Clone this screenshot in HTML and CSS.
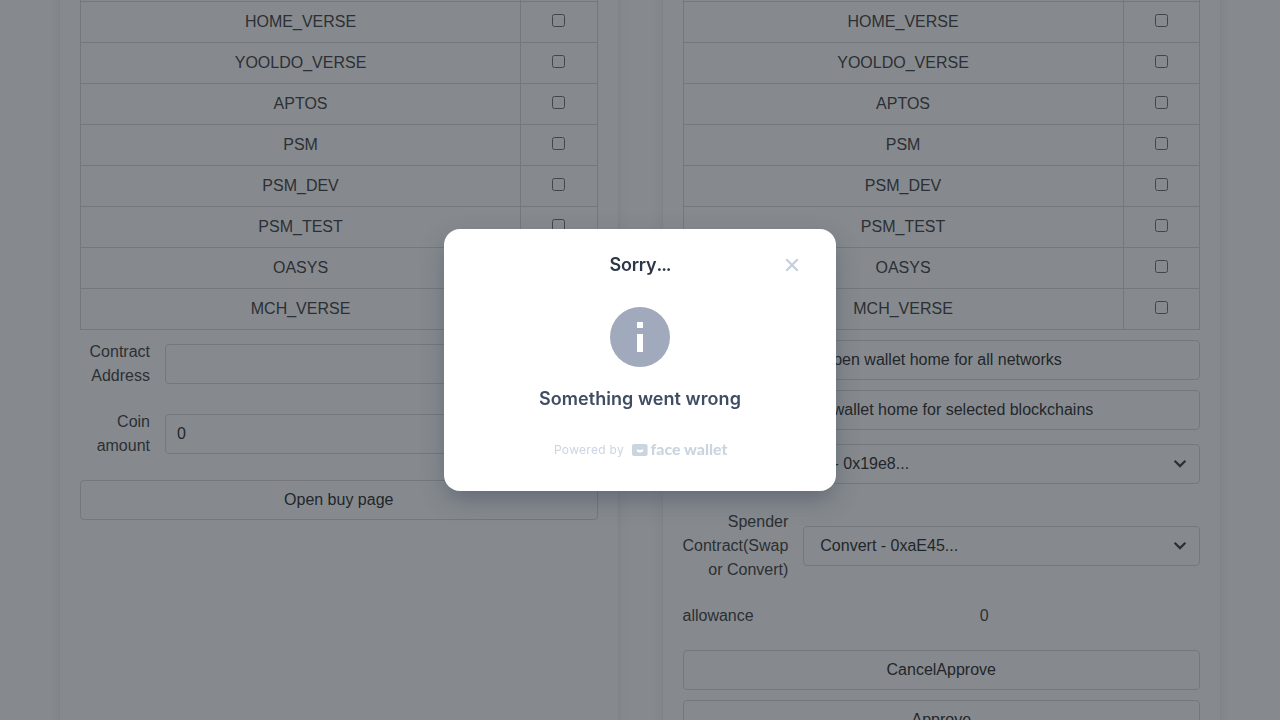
FILE: index.html
```html
<!DOCTYPE html>
<html lang="en">
<head>
<meta charset="utf-8">
<title>Face Wallet</title>
<link rel="stylesheet" href="styles.css">
</head>
<body>
<main class="page">
  <section class="box">
    <table class="networks">
      <tr><td></td><td class="check"></td></tr>
      <tr><td>HOME_VERSE</td><td class="check"><input type="checkbox"></td></tr>
      <tr><td>YOOLDO_VERSE</td><td class="check"><input type="checkbox"></td></tr>
      <tr><td>APTOS</td><td class="check"><input type="checkbox"></td></tr>
      <tr><td>PSM</td><td class="check"><input type="checkbox"></td></tr>
      <tr><td>PSM_DEV</td><td class="check"><input type="checkbox"></td></tr>
      <tr><td>PSM_TEST</td><td class="check"><input type="checkbox"></td></tr>
      <tr><td>OASYS</td><td class="check"><input type="checkbox"></td></tr>
      <tr><td>MCH_VERSE</td><td class="check"><input type="checkbox"></td></tr>
    </table>
    <div class="field first">
      <label class="label narrow">Contract Address</label>
      <input class="input" type="text">
    </div>
    <div class="field second">
      <label class="label narrow">Coin amount</label>
      <input class="input" type="text" value="0">
    </div>
    <button class="button">Open buy page</button>
  </section>
  <section class="box">
    <table class="networks">
      <tr><td></td><td class="check"></td></tr>
      <tr><td>HOME_VERSE</td><td class="check"><input type="checkbox"></td></tr>
      <tr><td>YOOLDO_VERSE</td><td class="check"><input type="checkbox"></td></tr>
      <tr><td>APTOS</td><td class="check"><input type="checkbox"></td></tr>
      <tr><td>PSM</td><td class="check"><input type="checkbox"></td></tr>
      <tr><td>PSM_DEV</td><td class="check"><input type="checkbox"></td></tr>
      <tr><td>PSM_TEST</td><td class="check"><input type="checkbox"></td></tr>
      <tr><td>OASYS</td><td class="check"><input type="checkbox"></td></tr>
      <tr><td>MCH_VERSE</td><td class="check"><input type="checkbox"></td></tr>
    </table>
    <button class="button stacked">Open wallet home for all networks</button>
    <button class="button stacked">Open wallet home for selected blockchains</button>
    <div class="field swap">
      <label class="label narrow"></label>
      <div class="select">Swap - 0x19e8...
        <svg class="arrow" width="14" height="10" viewBox="0 0 14 10"><path d="M1.6 1.8 7 7.1l5.4-5.3" /></svg>
      </div>
    </div>
    <div class="field spender">
      <label class="label wide">Spender Contract(Swap or Convert)</label>
      <div class="select">Convert - 0xaE45...
        <svg class="arrow" width="14" height="10" viewBox="0 0 14 10"><path d="M1.6 1.8 7 7.1l5.4-5.3" /></svg>
      </div>
    </div>
    <div class="allowance"><span>allowance</span><span class="amount">0</span></div>
    <button class="button">CancelApprove</button>
    <button class="button stacked">Approve</button>
  </section>
</main>
<div class="overlay">
  <div class="modal">
    <header class="modal-head">
      <h1 class="title">Sorry<span class="dots">...</span></h1>
      <svg class="close" width="24" height="24" viewBox="0 0 24 24"><path d="M6.3 6.3 17.7 17.7M17.7 6.3 6.3 17.7"/></svg>
    </header>
    <svg class="info" width="60" height="60" viewBox="0 0 60 60"><circle cx="30" cy="30" r="30" fill="#a0aabc"/><path d="M27 15h6v6h-6zM27 27h6v18h-6z" fill="#fff"/></svg>
    <p class="message">Something went wrong</p>
    <footer class="powered">
      <span>Powered by</span>
      <svg class="brand" width="96" height="20" viewBox="0 0 96 20"><rect x="0" y="4" width="15.6" height="12" rx="2" fill="#cbd5e0"/><path d="M4.7 9.2 8 10.2l3.3-1a3.3 3.3 0 0 1-6.6 0z" fill="#fff"/><text x="18.5" y="15" textLength="77" lengthAdjust="spacingAndGlyphs">face wallet</text></svg>
    </footer>
  </div>
</div>
</body>
</html>
```
FILE: styles.css
```css
* { box-sizing: border-box; }
body {
  margin: 0;
  height: 720px;
  overflow: hidden;
  background: #fff;
  color: #4a4a4a;
  font: 16px/24px "Liberation Sans", Arial, sans-serif;
}
.page {
  display: flex;
  gap: 45px;
  height: 760px;
  margin-top: -40px;
  padding: 0 60px;
  overflow: hidden;
}
.box {
  flex: 1;
  min-width: 0;
  height: 900px;
  padding: 0 20px;
  box-shadow: 0 8px 16px -2px rgba(10, 10, 10, .1), 0 0 0 1px rgba(10, 10, 10, .02);
}
.networks {
  width: 100%;
  table-layout: fixed;
  border-collapse: collapse;
}
.networks td {
  height: 41px;
  padding: 8px 12px;
  border: 1px solid #dbdbdb;
  text-align: center;
  vertical-align: top;
}
.networks .check { width: 76.4px; }
.networks input {
  width: 13px;
  height: 13px;
  margin: 0;
  vertical-align: baseline;
}
.field { display: flex; align-items: center; }
.label { flex: none; margin-right: 15px; text-align: right; }
.narrow { width: 70px; }
.wide { width: 105.8px; }
.first { margin-top: 10px; height: 48px; }
.second { margin: 22px 0; height: 48px; }
.input, .select, .button {
  height: 40px;
  border: 1px solid #dbdbdb;
  border-radius: 4px;
  background: #fff;
  color: #363636;
  font: inherit;
}
.input { flex: 1; min-width: 0; padding: 0 11px; }
.select {
  display: flex;
  flex: 1;
  align-items: center;
  justify-content: space-between;
  padding: 0 12px 0 16px;
}
.arrow { fill: none; stroke: #4a4a4a; stroke-width: 2.3; }
.button { display: block; width: 100%; padding: 0; text-align: center; }
.stacked { margin-top: 10px; }
.swap { height: 48px; margin-top: 10px; }
.swap .label { width: 74.5px; }
.spender { height: 72px; margin-top: 22px; }
.allowance { display: flex; margin: 22px 0; }
.amount { flex: 1; padding-left: 15px; text-align: center; }
.allowance span:first-child { width: 71px; }
.overlay {
  position: fixed;
  inset: 0;
  display: flex;
  align-items: center;
  justify-content: center;
  background: rgba(14, 21, 29, .5);
}
.modal {
  display: flex;
  flex-direction: column;
  align-items: center;
  width: 392px;
  height: 262px;
  padding-top: 22px;
  border-radius: 16px;
  background: #fff;
  box-shadow: 0 10px 24px -2px rgba(45, 55, 80, .4);
  font-family: Inter, sans-serif;
}
.modal-head {
  display: grid;
  grid-template-columns: 24px 1fr 24px;
  align-items: center;
  width: 100%;
  height: 28px;
  padding: 0 32px;
}
.title {
  grid-column: 2;
  margin: 0;
  color: #2d3748;
  font-size: 18px;
  font-weight: 600;
  line-height: 28px;
  letter-spacing: -.2px;
  text-align: center;
}
.dots { letter-spacing: -1px; }
.close { fill: none; stroke: #c5cfdb; stroke-width: 2.2; }
.info { flex: none; margin-top: 28px; }
.message {
  margin: 18px 0 0;
  color: #3f4d63;
  font-size: 18px;
  font-weight: 600;
  line-height: 28px;
  letter-spacing: .05px;
}
.powered {
  display: flex;
  align-items: center;
  gap: 8px;
  height: 20px;
  margin-top: 27px;
  padding-left: 2px;
  color: #cbd5e0;
  font-size: 12px;
  letter-spacing: .3px;
}
.brand text {
  fill: #cbd5e0;
  font: 900 15px Lato, sans-serif;
  letter-spacing: 0;
}
```
